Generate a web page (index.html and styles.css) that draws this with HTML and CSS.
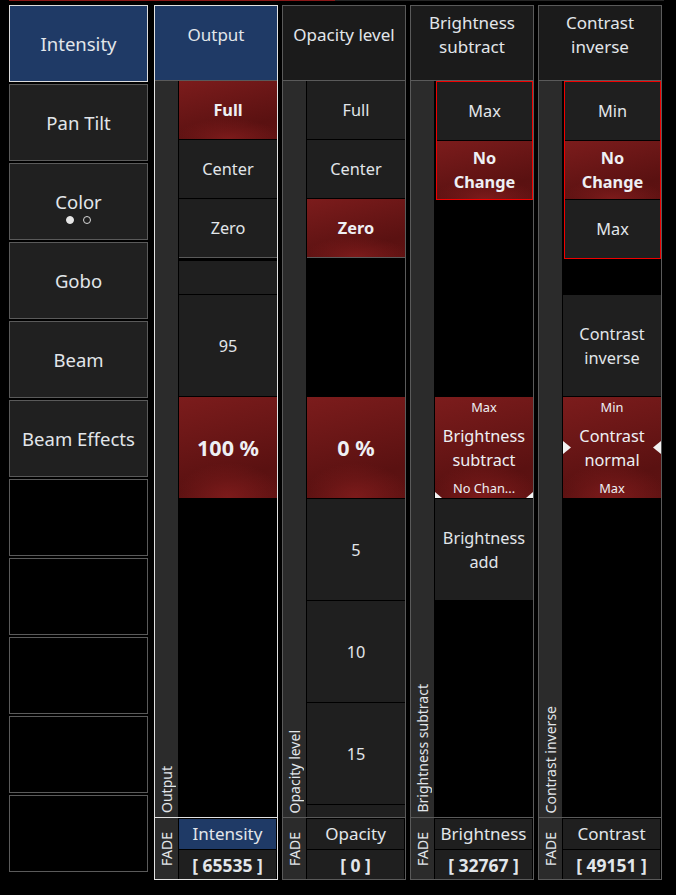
FILE: index.html
```html
<!DOCTYPE html>
<html>
<head>
<meta charset="utf-8">
<link rel="stylesheet" href="styles.css">
</head>
<body>
<div class="app">
  <div class="topbar"><div class="topbar-fill" style="width:326px"></div></div>
  <div class="main">
    <div class="features">
      <div class="fbtn sel">Intensity</div>
      <div class="fbtn">Pan Tilt</div>
      <div class="fbtn"><span>Color</span><span class="dots"><i class="dot on"></i><i class="dot"></i></span></div>
      <div class="fbtn">Gobo</div>
      <div class="fbtn">Beam</div>
      <div class="fbtn">Beam Effects</div>
      <div class="fbtn empty"></div>
      <div class="fbtn empty"></div>
      <div class="fbtn empty"></div>
      <div class="fbtn empty"></div>
      <div class="fbtn empty"></div>
    </div>
    <div class="cols">
      <!-- Output -->
      <div class="col sel">
        <div class="col-head">Output</div>
        <div class="col-body">
          <div class="strip"><span class="vlabel">Output</span></div>
          <div class="lists">
            <div class="presets-zone">
              <div class="presets">
                <div class="btn act">Full</div>
                <div class="btn">Center</div>
                <div class="btn">Zero</div>
              </div>
            </div>
            <div class="values">
              <div class="btn stub"></div>
              <div class="btn">95</div>
              <div class="btn act big">100 %</div>
            </div>
          </div>
        </div>
        <div class="col-foot">
          <div class="strip foot-strip"><span class="vlabel fade">FADE</span></div>
          <div class="foot-main">
            <div class="foot-label">Intensity</div>
            <div class="foot-value">[ 65535 ]</div>
          </div>
        </div>
      </div>
      <!-- Opacity -->
      <div class="col">
        <div class="col-head">Opacity level</div>
        <div class="col-body">
          <div class="strip"><span class="vlabel">Opacity level</span></div>
          <div class="lists">
            <div class="presets-zone">
              <div class="presets">
                <div class="btn">Full</div>
                <div class="btn">Center</div>
                <div class="btn act">Zero</div>
              </div>
            </div>
            <div class="values">
              <div class="pad-l"></div>
              <div class="btn act big">0 %</div>
              <div class="btn">5</div>
              <div class="btn">10</div>
              <div class="btn">15</div>
              <div class="btn"></div>
            </div>
          </div>
        </div>
        <div class="col-foot">
          <div class="strip foot-strip"><span class="vlabel fade">FADE</span></div>
          <div class="foot-main">
            <div class="foot-label">Opacity</div>
            <div class="foot-value">[ 0 ]</div>
          </div>
        </div>
      </div>
      <!-- Brightness -->
      <div class="col">
        <div class="col-head">Brightness<br>subtract</div>
        <div class="col-body">
          <div class="strip"><span class="vlabel">Brightness subtract</span></div>
          <div class="lists">
            <div class="presets-zone">
              <div class="presets hl">
                <div class="btn">Max</div>
                <div class="btn act">No<br>Change</div>
              </div>
            </div>
            <div class="values">
              <div class="pad-l"></div>
              <div class="btn act multi">
                <span class="sub">Max</span>
                <span class="mtext">Brightness<br>subtract</span>
                <span class="sub">No Chan...</span>
                <svg class="tri tri-bl" width="7" height="6" viewBox="0 0 7 6"><polygon points="0,0 7,6 0,6" fill="#f2f2f2"/></svg>
                <svg class="tri tri-br" width="7" height="6" viewBox="0 0 7 6"><polygon points="7,0 7,6 0,6" fill="#f2f2f2"/></svg>
              </div>
              <div class="btn">Brightness<br>add</div>
            </div>
          </div>
        </div>
        <div class="col-foot">
          <div class="strip foot-strip"><span class="vlabel fade">FADE</span></div>
          <div class="foot-main">
            <div class="foot-label">Brightness</div>
            <div class="foot-value">[ 32767 ]</div>
          </div>
        </div>
      </div>
      <!-- Contrast -->
      <div class="col">
        <div class="col-head">Contrast<br>inverse</div>
        <div class="col-body">
          <div class="strip"><span class="vlabel">Contrast inverse</span></div>
          <div class="lists">
            <div class="presets-zone">
              <div class="presets hl">
                <div class="btn">Min</div>
                <div class="btn act">No<br>Change</div>
                <div class="btn">Max</div>
              </div>
            </div>
            <div class="values">
              <div class="pad-s"></div>
              <div class="btn">Contrast<br>inverse</div>
              <div class="btn act multi">
                <span class="sub">Min</span>
                <span class="mtext">Contrast<br>normal</span>
                <span class="sub">Max</span>
                <svg class="tri tri-l" width="8" height="13" viewBox="0 0 8 13"><polygon points="0,0 8,6.5 0,13" fill="#f2f2f2"/></svg>
                <svg class="tri tri-r" width="8" height="13" viewBox="0 0 8 13"><polygon points="8,0 0,6.5 8,13" fill="#f2f2f2"/></svg>
              </div>
            </div>
          </div>
        </div>
        <div class="col-foot">
          <div class="strip foot-strip"><span class="vlabel fade">FADE</span></div>
          <div class="foot-main">
            <div class="foot-label">Contrast</div>
            <div class="foot-value">[ 49151 ]</div>
          </div>
        </div>
      </div>
    </div>
  </div>
</div>
</body>
</html>
```

FILE: styles.css
```css
* { box-sizing: border-box; }
html, body { margin: 0; padding: 0; background: #000; }
body {
  font-family: "Noto Sans", "Open Sans", sans-serif;
  color: #e2e6ea;
  width: 676px;
  height: 895px;
  overflow: hidden;
}
.app { padding-left: 9px; }
.topbar { height: 1px; width: 655px; background: #262626; margin-bottom: 4px; display: flex; }
.topbar-fill { height: 1px; background: #8a1818; }
.main { display: flex; align-items: flex-start; }

.features { width: 139px; display: flex; flex-direction: column; gap: 2px; margin-right: 6px; }
.fbtn {
  height: 77px;
  border: 1px solid #5a5a5a;
  background: #202020;
  display: flex;
  align-items: center;
  justify-content: center;
  font-size: 18.5px;
  position: relative;
}
.fbtn.sel { background: #1f3a66; border-color: #dcdcdc; }
.fbtn.empty { background: #000; }
.dots { position: absolute; left: 0; right: 0; bottom: 15px; display: flex; justify-content: center; gap: 9px; align-items: center; }
.dot { display: block; width: 8px; height: 8px; border-radius: 50%; border: 1px solid #d8d8d8; }
.dot.on { background: #e6e6e6; border-color: #e6e6e6; }

.cols { display: flex; gap: 4px; }
.col { width: 124px; height: 875px; border: 1px solid #5a5a5a; display: flex; flex-direction: column; }
.col.sel { border-color: #e2e2e2; }
.col-head {
  height: 75px;
  flex-shrink: 0;
  border-bottom: 1px solid #5a5a5a;
  background: #1b1b1b;
  display: flex;
  align-items: center;
  justify-content: center;
  text-align: center;
  padding-bottom: 17px;
  font-size: 17px;
  line-height: 24px;
}
.col.sel .col-head { background: #1f3a66; }

.col-body { flex: 1; display: flex; gap: 1px; min-height: 0; }
.strip {
  width: 23px;
  flex-shrink: 0;
  background: #2b2b2b;
  display: flex;
  flex-direction: column;
  justify-content: flex-end;
  align-items: center;
  padding-bottom: 4px;
}
.vlabel { writing-mode: vertical-rl; transform: rotate(180deg); font-size: 14px; line-height: 18px; white-space: nowrap; }

.lists { flex: 1; display: flex; flex-direction: column; min-width: 0; }
.presets-zone { height: 180px; flex-shrink: 0; }
.presets { display: flex; flex-direction: column; gap: 1px; border-bottom: 1px solid #5a5a5a; }
.presets.hl { border: 1px solid #f00000; margin-left: 1px; }
.btn {
  background: #1f1f1f;
  display: flex;
  align-items: center;
  justify-content: center;
  text-align: center;
  font-size: 16.3px;
  line-height: 24px;
  flex-shrink: 0;
  position: relative;
}
.presets .btn { height: 58px; }
.values { flex: 1; overflow: hidden; display: flex; flex-direction: column; gap: 1px; min-height: 0; }
.values .btn { height: 101px; }
.values .btn.stub { height: 33px; }
.pad-s { height: 33px; flex-shrink: 0; }
.pad-l { height: 135px; flex-shrink: 0; }

.act {
  background:
    radial-gradient(ellipse 55% 35% at 50% 100%, rgba(128, 28, 28, 0.9), rgba(128, 28, 28, 0)),
    linear-gradient(165deg, #7c1c1c 0%, #6c1717 35%, #5a1111 75%, #5f1212 100%);
  font-weight: 700;
  color: #eef0f4;
}
.act.big { font-size: 21.5px; }
.act.multi { font-weight: 400; flex-direction: column; justify-content: space-between; padding: 2px 0; }
.sub { font-size: 12.8px; line-height: 16px; }
.mtext { font-size: 16.3px; line-height: 24px; }
.tri { position: absolute; display: block; }
.tri-bl { left: 0; bottom: 0; }
.tri-br { right: 0; bottom: 0; }
.tri-l { left: 0; top: 44px; }
.tri-r { right: 0; top: 44px; }

.col-foot { height: 62px; flex-shrink: 0; border-top: 1px solid #5a5a5a; display: flex; gap: 1px; }
.col.sel .col-foot { border-top-color: #e2e2e2; }
.foot-strip { justify-content: center; padding-bottom: 0; }
.fade { font-size: 14px; }
.foot-main { flex: 1; display: flex; flex-direction: column; gap: 1px; padding: 1px 1px 0 0; }
.foot-label { height: 30px; background: #1f1f1f; display: flex; align-items: center; justify-content: center; font-size: 17px; line-height: 22px; }
.col.sel .foot-label { background: #1f3a66; }
.foot-value { height: 29px; background: #1f1f1f; display: flex; align-items: center; justify-content: center; font-size: 17.5px; line-height: 22px; font-weight: 700; }
```
